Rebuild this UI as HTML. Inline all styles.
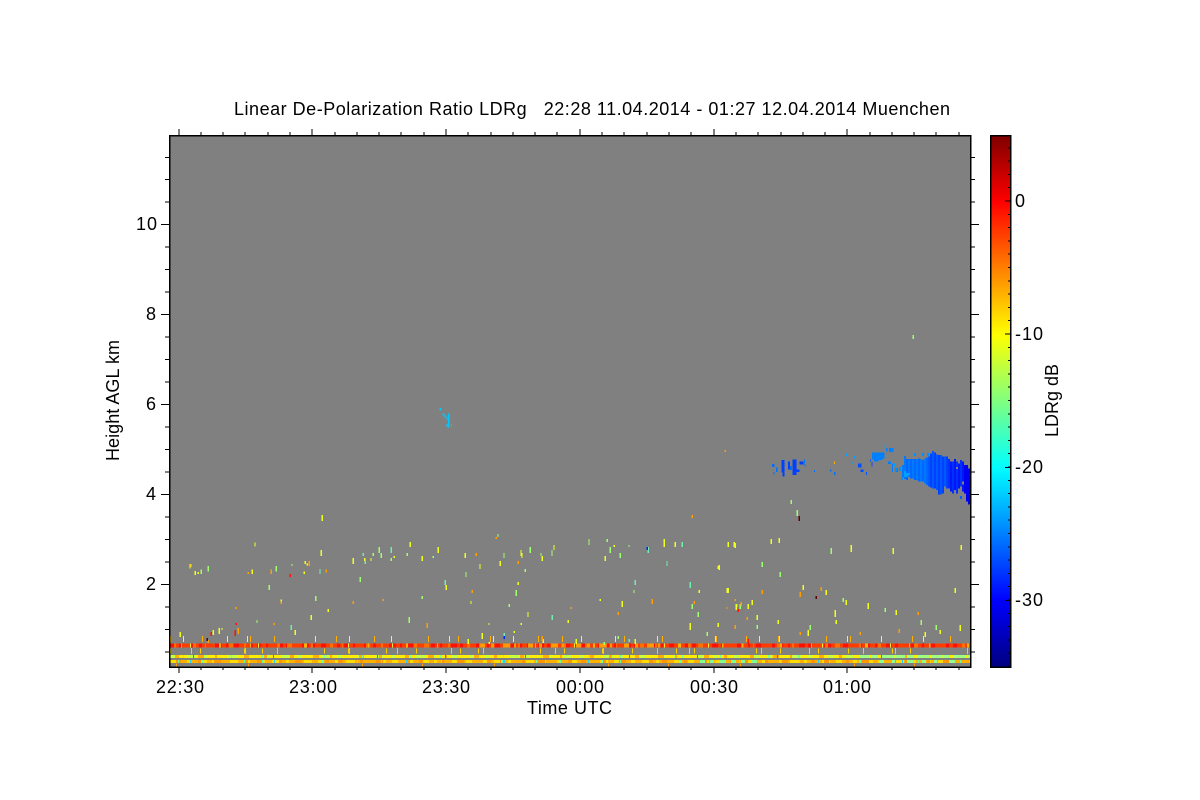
<!DOCTYPE html>
<html>
<head>
<meta charset="utf-8">
<style>
html,body{margin:0;padding:0;background:#fff;width:1200px;height:800px;overflow:hidden}
svg{display:block}
text{font-family:"Liberation Sans",sans-serif;font-size:18px;fill:#000}
.s{fill:none;stroke-width:1.5;shape-rendering:crispEdges}
.z{fill:none;stroke-width:4;shape-rendering:crispEdges}
.b{fill:none;shape-rendering:crispEdges}
.c{fill:none;stroke-width:6;shape-rendering:crispEdges}
.t{fill:none;stroke:#000;shape-rendering:crispEdges}
</style>
</head>
<body>
<svg width="1200" height="800" viewBox="0 0 1200 800" xmlns="http://www.w3.org/2000/svg">
<defs>
<linearGradient id="jet" x1="0" y1="1" x2="0" y2="0">
<stop offset="0" stop-color="#00007f"/>
<stop offset=".125" stop-color="#0000ff"/>
<stop offset=".375" stop-color="#00ffff"/>
<stop offset=".625" stop-color="#ffff00"/>
<stop offset=".875" stop-color="#ff0000"/>
<stop offset="1" stop-color="#7f0000"/>
</linearGradient>
<clipPath id="pl"><rect x="170" y="136" width="800" height="531"/></clipPath>
</defs>
<rect width="1200" height="800" fill="#fff"/>
<rect x="169" y="135" width="802" height="532" fill="#808080"/>

<g clip-path="url(#pl)">
<!-- sparse specks around the bands -->
<g class="b">
<line x1="170" x2="970" y1="639" y2="639" stroke-width="6" stroke="#ffb000" stroke-dasharray="1 31 1 47 1 23 1 61 1 37 1 53 1 29"/>
<line x1="183" x2="970" y1="639" y2="639" stroke-width="6" stroke="#e8ff30" stroke-dasharray="1 43 1 19 1 67 1 33 1 41 1 57"/>
<line x1="170" x2="970" y1="651" y2="651" stroke="#ffd000" stroke-dasharray="1 29 1 43 1 17 1 61 1 23 1 37" stroke-width="5"/>
<line x1="191" x2="970" y1="651" y2="651" stroke="#50ffb0" stroke-dasharray="1 53 1 31 1 71 1 47" stroke-width="6"/>
<line x1="176" x2="970" y1="665" y2="665" stroke="#ffa000" stroke-dasharray="1 71 1 113 1 59" stroke-width="3"/>
</g>
<!-- red band -->
<g class="b" stroke-width="4">
<line x1="170" x2="970" y1="645.5" y2="645.5" stroke="#ff3c00"/>
<line x1="170" x2="970" y1="645.5" y2="645.5" stroke="#ff1000" stroke-dasharray="4 5 2 9 6 3 3 13 7 4 2 6 5 11 3 4"/>
<line x1="174" x2="970" y1="645.5" y2="645.5" stroke="#ff7000" stroke-dasharray="2 17 3 9 1 23 4 11 2 31 3 7 5 19"/>
<line x1="181" x2="970" y1="645.5" y2="645.5" stroke="#ffb000" stroke-dasharray="1 37 2 29 1 53 3 41 1 19"/>
<line x1="190" x2="970" y1="645.5" y2="645.5" stroke="#ffee30" stroke-dasharray="1 67 1 89 1 43 1 113"/>
<line x1="480" x2="660" y1="645.5" y2="645.5" stroke="#ff9a00" stroke-dasharray="5 6 3 9 7 4 2 12"/>
</g>
<!-- yellow band -->
<g class="b" stroke-width="3.4">
<line x1="170" x2="970" y1="656.5" y2="656.5" stroke="#ffee00"/>
<line x1="170" x2="970" y1="656.5" y2="656.5" stroke="#c8ff40" stroke-dasharray="5 13 7 9 3 21 9 6 4 17"/>
<line x1="175" x2="970" y1="656.5" y2="656.5" stroke="#ffb000" stroke-dasharray="4 19 6 11 2 27 5 15 3 23"/>
<line x1="183" x2="970" y1="656.5" y2="656.5" stroke="#80ff90" stroke-dasharray="1 47 1 29 2 61 1 37"/>
<line x1="193" x2="970" y1="656.5" y2="656.5" stroke="#ff4000" stroke-dasharray="1 79 1 103 1 67"/>
<line x1="860" x2="970" y1="656.5" y2="656.5" stroke="#a0ff80" stroke-dasharray="9 3 6 4 12 2"/>
</g>
<!-- orange band -->
<g class="b" stroke-width="3.4">
<line x1="170" x2="970" y1="661.5" y2="661.5" stroke="#ffb000"/>
<line x1="170" x2="970" y1="661.5" y2="661.5" stroke="#ffdc00" stroke-dasharray="6 11 4 7 9 5 3 15 8 6"/>
<line x1="176" x2="970" y1="661.5" y2="661.5" stroke="#ff9800" stroke-dasharray="5 17 3 13 7 23 4 9"/>
<line x1="178" x2="970" y1="661.5" y2="661.5" stroke="#70ffa0" stroke-dasharray="1 23 1 41 1 17 1 59 2 33"/>
<line x1="190" x2="970" y1="661.5" y2="661.5" stroke="#20d0ff" stroke-dasharray="1 83 1 131 1 97"/>
<line x1="700" x2="760" y1="661.5" y2="661.5" stroke="#80ff90" stroke-dasharray="5 5 4 6 6 5"/>
<line x1="880" x2="960" y1="661.5" y2="661.5" stroke="#90ff90" stroke-dasharray="4 8 3 12 6 9"/>
</g>

<!-- specks: left block -->
<g transform="translate(160 530) scale(.33333)">
<path class="z" stroke="#f0ff20" d="M285 37v13M90 102v14M115 126v6M277 118v14M433 125v7M436 93v9M442 101v6M484 60v18M580 84v18M614 84v9M703 78v6M751 36v15M787 78v15M835 51v18M859 165v15M364 208v7M505 237v9M454 255v15M633 84v9M186 294v6"/>
<path class="z" stroke="#a0ff70" d="M124 118v14M145 108v17M349 108v17M396 102v6M467 198v15M601 141v15M658 51v18M664 69v15M640 69v9M787 198v9M748 261v18M291 270v9M694 84v9M328 165v15M742 69v9M820 78v6"/>
<path class="z" stroke="#ffa000" d="M265 126v6M334 118v14M448 93v15M499 118v9M364 214v8M580 213v9M670 207v6M229 231v6M343 279v6M802 279v15"/>
<path class="z" stroke="#70f0b0" d="M480 117v15M610 69v9M616 93v9M694 51v18M856 150v15M394 285v15"/>
<path class="z" stroke="#ff1000" d="M391 132v9M229 279v6"/>
</g>
<!-- specks: middle block -->
<g transform="translate(460 530) scale(.33333)">
<path class="z" stroke="#f0ff20" d="M16 69v15M60 102v15M121 93v15M183 60v18M186 69v15M282 45v15M247 78v15M436 78v15M463 45v6M613 27v24M646 36v15M775 108v9M823 36v15M175 156v9M33 213v9M204 246v15M325 270v9M87 279v6M184 279v6M163 303v6M67 309v18M250 327v12M25 327v15M349 327v15M421 207v6M487 213v18M718 180v9M802 174v15M865 222v15M892 255v15M691 279v15M526 327v15M88 336v6"/>
<path class="z" stroke="#a0ff70" d="M114 12v9M132 69v15M211 51v18M243 69v9M276 60v18M387 27v18M442 27v9M451 51v18M481 69v15M507 45v6M196 117v9M18 126v15M169 180v18M148 222v9M522 180v9M715 246v15M841 222v15M475 318v9M433 336v9"/>
<path class="z" stroke="#ffa000" d="M109 21v6M49 69v9M175 93v9M37 180v9M334 231v6M475 246v9M577 207v15M703 213v9M801 231v6M826 207v6M832 222v9M862 261v9M247 318v15"/>
<path class="z" stroke="#70f0b0" d="M667 36v15M565 51v18M621 93v15M277 255v15M526 150v15M691 156v18M133 309v9M508 327v9"/>
<path class="z" stroke="#0020ff" d="M133 318v9M562 51v9"/>
<path class="z" stroke="#ff1000" d="M835 237v9M865 327v9"/>
</g>
<!-- specks: right and remaining -->
<path class="s" stroke="#f0ff20" d="M195 571v4M213 630v5M322 515v6M728 542v5M735 543v5M771 539v5M779 538v5M851 545v7M893 548v6M961 545v5M719 565v5M728 588v5M736 604v6M752 600v5M808 630v6M846 600v5M868 603v6M896 610v5M925 632v5M960 625v6M940 630v4M835 610v7M836 620v4M690 625v5M180 632v5M219 628v6M295 630v5M955 588v5M803 585v5M826 590v5M778 620v4M718 623v4"/>
<path class="s" stroke="#a0ff70" d="M831 548v6M762 562v5M780 572v5M913 335v4M791 500v4M797 510v6M843 598v4M885 608v4M921 620v5M936 625v5M810 625v5M757 625v4M707 632v4M692 604v5"/>
<path class="s" stroke="#ffa000" d="M191 564v3M762 590v4M800 592v5M821 587v4M918 612v3M899 629v4M741 602v4M735 625v4M692 515v3M725 450v2M800 632v3M860 632v3M208 640v3M238 628v6"/>
<path class="s" stroke="#ff1000" d="M235 630v6M748 640v4M211 632v4"/>
<path class="s" stroke="#600000" d="M799 516v5M816 596v3M207 638v3"/>

<!-- high cyan feature -->
<g transform="translate(430 400) scale(.33333)">
<path fill="#00c8ff" shape-rendering="crispEdges" d="M29 24h6v7h-6zM38 40h5v7h-5zM44 46h5v7h-5zM50 52h5v7h-5zM54 40h5v42h-5zM50 72h5v9h-5zM63 70h3v10h-3z"/>
</g>

<!-- small clouds -->
<g transform="translate(740 430) scale(.33333)" shape-rendering="crispEdges">
<path fill="#0040ff" d="M124 90h9v50h-6v-12h-3zM144 94h6v24h-6zM158 88h12v30h8v8h-8v9h-12zM178 94h12v10h-12z"/>
<path fill="#0070ff" d="M96 102h8v9h-8zM108 112h4v14h-4zM100 126h3v8h-3zM150 108h6v12h-6zM192 88h3v12h-3zM194 102h3v8h-3zM222 120h3v6h-3zM270 118h4v6h-4zM282 126h4v9h-4z"/>
<path fill="#ffb000" d="M282 94h3v8h-3z"/>
<path fill="#00a0ff" d="M318 70h3v8h-3zM334 94h3v8h-3zM342 78h3v8h-3zM430 45h3v8h-3zM460 100h5v10h-5z"/>
<path fill="#0050ff" d="M354 100h10v12h-10zM362 118h9v8h-9zM378 126h3v9h-3zM390 88h3v6h-3zM394 96h4v14h-4z"/>
<path fill="#0080ff" d="M396 68h38v18h-6v4h-12v4h-14v-6h-6zM438 54h5v10h-5zM447 54h14v12h-14zM444 94h9v8h-9zM456 100h3v26h-3zM466 114h8v12h-8z"/>
</g>

<!-- main cloud, column by column -->
<g transform="translate(895 445) scale(.33333)">
<path class="c" stroke="#0090ff" d="M3 69v9M15 66v12M21 96v9M60 24v9M84 24v9M99 24v9"/>
<path class="c" stroke="#0078ff" d="M24 60V96M30 33V102M42 42V96M54 42V100M66 42V105M78 42V110M90 40V115"/>
<path class="c" stroke="#0068ff" d="M36 42V105M48 42V100M60 42V105M72 40V110M84 45V110M96 38V120"/>
<path class="c" stroke="#0058ff" d="M102 35V125M114 18V130M126 28V135M138 30V148M150 35V125"/>
<path class="c" stroke="#0040ff" d="M108 25V128M120 22V130M132 30V148M144 35V145M156 35V130"/>
<path class="c" stroke="#0030ff" d="M162 42V130M174 50V145M186 50V145M198 45V125"/>
<path class="c" stroke="#0018f8" d="M168 50V140M180 42V135M192 55V130M204 50V140"/>
<path class="c" stroke="#0000f0" d="M210 60V145M216 60V170M222 70V178"/>
<path class="c" stroke="#0060ff" d="M198 153v9"/>
<path class="c" stroke="#00a0ff" d="M30 78V96M36 84V96M42 84V90"/>
<path class="c" stroke="#808080" d="M168 40V50M204 110V118M186 66V72"/>
</g>
</g>

<!-- plot frame -->
<rect x="169.5" y="135.5" width="801" height="531.5" fill="none" stroke="#000" stroke-width="1.5" shape-rendering="crispEdges"/>
<!-- ticks -->
<path class="t" stroke-width="1.4" d="M179 135V129M312 135V129M446 135V129M580 135V129M714 135V129M847 135V129
M201 135V132M223 135V132M245 135V132M268 135V132M290 135V132M335 135V132M357 135V132M379 135V132M401 135V132M424 135V132M468 135V132M491 135V132M513 135V132M535 135V132M557 135V132M602 135V132M624 135V132M647 135V132M669 135V132M691 135V132M736 135V132M758 135V132M781 135V132M803 135V132M825 135V132M870 135V132M892 135V132M914 135V132M936 135V132M959 135V132
M179 667V673M312 667V673M446 667V673M580 667V673M714 667V673M847 667V673
M201 667V670M223 667V670M245 667V670M268 667V670M290 667V670M335 667V670M357 667V670M379 667V670M401 667V670M424 667V670M468 667V670M491 667V670M513 667V670M535 667V670M557 667V670M602 667V670M624 667V670M647 667V670M669 667V670M691 667V670M736 667V670M758 667V670M781 667V670M803 667V670M825 667V670M870 667V670M892 667V670M914 667V670M936 667V670M959 667V670
M169 224.5H161M169 314.5H161M169 404.5H161M169 494.5H161M169 584.5H161
M169 157.5H165M169 179.5H165M169 202H165M169 247H165M169 269.5H165M169 292H165M169 337H165M169 359.5H165M169 382H165M169 427H165M169 449.5H165M169 472H165M169 517H165M169 539.5H165M169 562H165M169 607H165M169 629.5H165M169 652H165
M971 224.5H979M971 314.5H979M971 404.5H979M971 494.5H979M971 584.5H979
M971 157.5H975M971 179.5H975M971 202H975M971 247H975M971 269.5H975M971 292H975M971 337H975M971 359.5H975M971 382H975M971 427H975M971 449.5H975M971 472H975M971 517H975M971 539.5H975M971 562H975M971 607H975M971 629.5H975M971 652H975"/>

<!-- colorbar -->
<rect x="990.5" y="135.5" width="20" height="531.5" fill="url(#jet)" stroke="#000" stroke-width="1.5" shape-rendering="crispEdges"/>
<line x1="1009" x2="1009" y1="135" y2="667" stroke="#000" stroke-width="2.5" stroke-dasharray="1 12.3" stroke-dashoffset="-12.3" shape-rendering="crispEdges"/>
<path class="t" stroke-width="1.2" d="M1005 201H1010M1005 334H1010M1005 467.5H1010M1005 600.5H1010"/>

<!-- text -->
<text x="234" y="115" textLength="716" lengthAdjust="spacing" xml:space="preserve">Linear De-Polarization Ratio LDRg   22:28 11.04.2014 - 01:27 12.04.2014 Muenchen</text>
<text x="156" y="693" textLength="48" lengthAdjust="spacing">22:30</text>
<text x="289" y="693" textLength="48" lengthAdjust="spacing">23:00</text>
<text x="422" y="693" textLength="48" lengthAdjust="spacing">23:30</text>
<text x="556" y="693" textLength="48" lengthAdjust="spacing">00:00</text>
<text x="690" y="693" textLength="48" lengthAdjust="spacing">00:30</text>
<text x="823" y="693" textLength="48" lengthAdjust="spacing">01:00</text>
<text x="527" y="714" textLength="85" lengthAdjust="spacing">Time UTC</text>
<text x="136" y="230" textLength="21" lengthAdjust="spacing">10</text>
<text x="146" y="320">8</text>
<text x="146" y="410">6</text>
<text x="146" y="500">4</text>
<text x="146" y="590">2</text>
<text transform="translate(119 461) rotate(-90)" textLength="121" lengthAdjust="spacing">Height AGL km</text>
<text x="1015" y="207">0</text>
<text x="1015" y="340" textLength="28" lengthAdjust="spacing">-10</text>
<text x="1015" y="473" textLength="28" lengthAdjust="spacing">-20</text>
<text x="1015" y="606" textLength="28" lengthAdjust="spacing">-30</text>
<text transform="translate(1058 437) rotate(-90)" textLength="73" lengthAdjust="spacing">LDRg dB</text>
</svg>
</body>
</html>
